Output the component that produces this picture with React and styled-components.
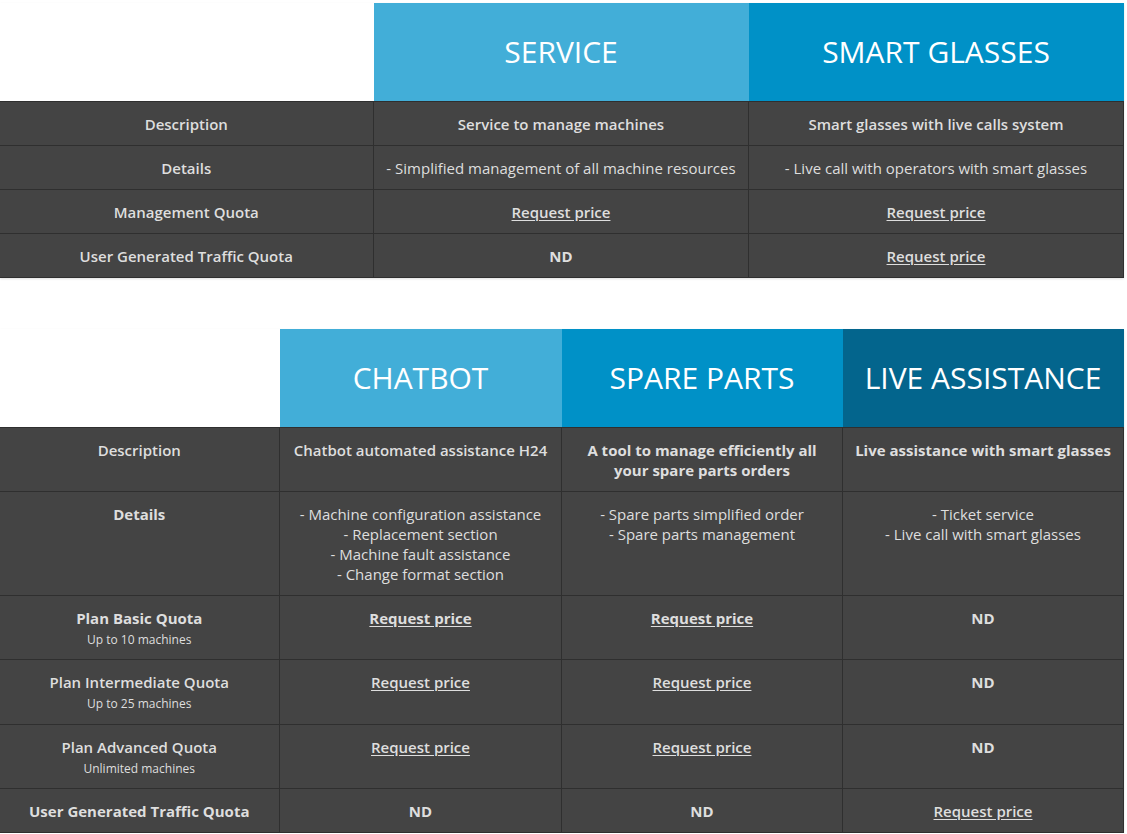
import React from "react";
import styled, { createGlobalStyle } from "styled-components";

const GlobalStyle = createGlobalStyle`
  body {
    margin: 0;
    background: #ffffff;
    font-family: "Open Sans", "Noto Sans", sans-serif;
  }
`;

const tones = {
  light: "#42aed8",
  mid: "#0091c7",
  dark: "#03658d",
};

const ND = { text: "ND", weight: 700 };
const price = { link: true };

const firstTable = {
  labelWidth: 374,
  columns: [
    { title: "SERVICE", tone: "light", width: 375 },
    { title: "SMART GLASSES", tone: "mid", width: 375 },
  ],
  rows: [
    {
      label: "Description",
      cells: [
        { text: "Service to manage machines", weight: 600 },
        { text: "Smart glasses with live calls system", weight: 600 },
      ],
    },
    {
      label: "Details",
      cells: [
        { lines: ["- Simplified management of all machine resources"] },
        { lines: ["- Live call with operators with smart glasses"] },
      ],
    },
    { label: "Management Quota", cells: [price, price] },
    { label: "User Generated Traffic Quota", cells: [ND, price] },
  ],
};

const secondTable = {
  labelWidth: 280,
  columns: [
    { title: "CHATBOT", tone: "light", width: 282 },
    { title: "SPARE PARTS", tone: "mid", width: 281 },
    { title: "LIVE ASSISTANCE", tone: "dark", width: 281 },
  ],
  rows: [
    {
      label: "Description",
      cells: [
        { text: "Chatbot automated assistance H24", weight: 600 },
        { text: "A tool to manage efficiently all your spare parts orders", weight: 700 },
        { text: "Live assistance with smart glasses", weight: 700 },
      ],
    },
    {
      label: "Details",
      labelWeight: 700,
      cells: [
        {
          lines: [
            "- Machine configuration assistance",
            "- Replacement section",
            "- Machine fault assistance",
            "- Change format section",
          ],
        },
        { lines: ["- Spare parts simplified order", "- Spare parts management"] },
        { lines: ["- Ticket service", "- Live call with smart glasses"] },
      ],
    },
    {
      label: "Plan Basic Quota",
      labelWeight: 700,
      linkWeight: 700,
      sub: "Up to 10 machines",
      cells: [price, price, ND],
    },
    {
      label: "Plan Intermediate Quota",
      sub: "Up to 25 machines",
      cells: [price, price, ND],
    },
    {
      label: "Plan Advanced Quota",
      sub: "Unlimited machines",
      cells: [price, price, ND],
    },
    {
      label: "User Generated Traffic Quota",
      labelWeight: 700,
      cells: [ND, ND, price],
    },
  ],
};

function ValueContent({ cell, linkWeight }) {
  if (cell.link)
    return (
      <PriceLink href="#" $weight={linkWeight}>
        Request price
      </PriceLink>
    );
  if (cell.lines)
    return cell.lines.map((line) => <Line key={line}>{line}</Line>);
  return <Value $weight={cell.weight}>{cell.text}</Value>;
}

function ComparisonTable({ data }) {
  const total =
    data.labelWidth + data.columns.reduce((sum, c) => sum + c.width, 0);
  return (
    <Table $width={total}>
      <colgroup>
        <col style={{ width: data.labelWidth }} />
        {data.columns.map((c) => (
          <col key={c.title} style={{ width: c.width }} />
        ))}
      </colgroup>
      <thead>
        <tr>
          <Blank />
          {data.columns.map((c) => (
            <HeadCell key={c.title} $tone={c.tone}>
              {c.title}
            </HeadCell>
          ))}
        </tr>
      </thead>
      <tbody>
        {data.rows.map((row) => (
          <tr key={row.label}>
            <Cell>
              <Label $weight={row.labelWeight}>{row.label}</Label>
              {row.sub && <Sub>{row.sub}</Sub>}
            </Cell>
            {row.cells.map((cell, i) => (
              <Cell key={i}>
                <ValueContent cell={cell} linkWeight={row.linkWeight} />
              </Cell>
            ))}
          </tr>
        ))}
      </tbody>
    </Table>
  );
}

export default function App() {
  return (
    <>
      <GlobalStyle />
      <Page>
        <ComparisonTable data={firstTable} />
        <ComparisonTable data={secondTable} />
      </Page>
    </>
  );
}

const Page = styled.div`
  display: flex;
  flex-direction: column;
  align-items: flex-end;
  gap: 51px;
  width: 1124px;
  padding-top: 3px;
`;

const Table = styled.table`
  width: ${(p) => p.$width}px;
  table-layout: fixed;
  border-collapse: collapse;
  border-spacing: 0;
  color: #dedede;
  font-size: 15px;
  line-height: 20px;
  text-align: center;
  box-shadow: 0 1px 2px rgba(0, 0, 0, 0.12);
`;

const Blank = styled.th`
  background: #ffffff;
  padding: 0;
`;

const HeadCell = styled.th`
  height: 97.5px;
  padding: 0 6px;
  background: ${(p) => tones[p.$tone]};
  color: #ffffff;
  font-size: 30px;
  font-weight: 400;
  vertical-align: middle;
  white-space: nowrap;
`;

const Cell = styled.td`
  padding: 12px 10px 11.2px;
  background: #444444;
  border: 1px solid #2f2f2f;
  vertical-align: top;
  &:first-child {
    border-left: none;
  }
`;

const Label = styled.div`
  font-weight: ${(p) => p.$weight || 600};
`;

const Sub = styled.div`
  padding-top: 3px;
  font-size: 12px;
  line-height: 17px;
  font-weight: 400;
`;

const Value = styled.div`
  font-weight: ${(p) => p.$weight || 400};
`;

const Line = styled.div`
  font-weight: 400;
`;

const PriceLink = styled.a`
  color: #dedede;
  font-weight: ${(p) => p.$weight || 600};
  text-decoration: underline;
  text-underline-offset: 2px;
`;
